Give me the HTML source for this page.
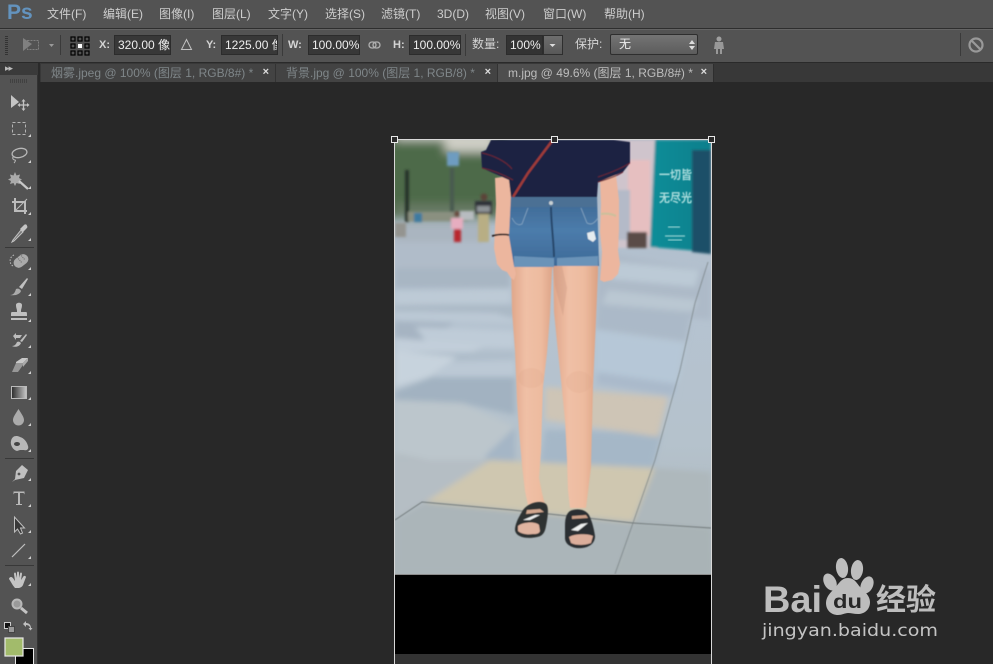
<!DOCTYPE html>
<html><head><meta charset="utf-8"><style>
*{box-sizing:border-box}
html,body{margin:0;padding:0;width:993px;height:664px;overflow:hidden;background:#282828;font-family:"Liberation Sans","Noto Sans CJK SC",sans-serif}
.a{position:absolute;white-space:nowrap}
.m{top:6px;font-size:12px;line-height:16px;color:#cdcdcd}
.l{font-size:12px;line-height:14px;color:#d4d4d4}
.i{height:20px;background:#383838;border:1px solid #2c2c2c;color:#eee;font-size:12px;line-height:19px;padding-left:3px;overflow:hidden;top:35px}
.t{top:64px;height:18px;font-size:12px;line-height:19px;color:#7f8689;border-right:1px solid #333;background:#434343;padding-left:10px}
.x{position:absolute;top:0;font-size:11px;line-height:16px;color:#ddd;font-weight:bold}
</style></head><body>
<div class="a" style="left:0;top:0;width:993px;height:28px;background:#535353"></div>
<div class="a" style="left:0;top:28px;width:993px;height:1px;background:#2e2e2e"></div>
<div class="a" style="left:0;top:29px;width:993px;height:33px;background:#535353;border-top:1px solid #646464"></div>
<div class="a" style="left:0;top:62px;width:993px;height:1px;background:#2a2a2a"></div>
<div class="a" style="left:0;top:63px;width:993px;height:19px;background:#383838"></div>
<div class="a" style="left:0;top:82px;width:993px;height:582px;background:#282828"></div>

<div class="a" style="left:7px;top:0;font-size:21px;line-height:26px;font-weight:bold;color:#6393be">Ps</div>
<div class="a m" style="left:47px">文件(F)</div>
<div class="a m" style="left:103px">编辑(E)</div>
<div class="a m" style="left:159px">图像(I)</div>
<div class="a m" style="left:212px">图层(L)</div>
<div class="a m" style="left:268px">文字(Y)</div>
<div class="a m" style="left:325px">选择(S)</div>
<div class="a m" style="left:381px">滤镜(T)</div>
<div class="a m" style="left:437px">3D(D)</div>
<div class="a m" style="left:485px">视图(V)</div>
<div class="a m" style="left:543px">窗口(W)</div>
<div class="a m" style="left:604px">帮助(H)</div>

<svg class="a" style="left:0;top:29px" width="180" height="33" viewBox="0 29 180 33">
<path d="M5 36.500h3M5 38.500h3M5 40.500h3M5 42.500h3M5 44.500h3M5 46.500h3M5 48.500h3M5 50.500h3M5 52.500h3M5 54.500h3" stroke="#333" stroke-width="1"/>
<path d="M23 38l9 6-9 7z" fill="#808080"/><rect x="27.500" y="40.500" width="11" height="9" fill="none" stroke="#808080" stroke-dasharray="2 1"/>
<path d="M49 44h5l-2.500 3z" fill="#9a9a9a"/><path d="M60.500 35v20" stroke="#3a3a3a"/>
<g fill="none" stroke="#000" stroke-width="1.200"><rect x="71" y="37" width="4" height="4"/><rect x="78" y="37" width="4" height="4"/><rect x="85" y="37" width="4" height="4"/><rect x="71" y="44" width="4" height="4"/><rect x="85" y="44" width="4" height="4"/><rect x="71" y="51" width="4" height="4"/><rect x="78" y="51" width="4" height="4"/><rect x="85" y="51" width="4" height="4"/></g>
<rect x="78" y="44" width="4" height="4" fill="#fff"/>
</svg>

<div class="a l" style="left:99px;top:38px;font-weight:bold;font-size:11px">X:</div>
<div class="a i" style="left:114px;width:57px">320.00 像素</div>
<svg class="a" style="left:180px;top:38px" width="13" height="13"><path d="M6.500 1.500l5 10h-10z" fill="none" stroke="#c0c0c0"/></svg>
<div class="a l" style="left:206px;top:38px;font-weight:bold;font-size:11px">Y:</div>
<div class="a i" style="left:221px;width:57px">1225.00 像素</div>
<div class="a" style="left:282px;top:34px;width:1px;height:22px;background:#3a3a3a"></div>
<div class="a l" style="left:288px;top:38px;font-weight:bold;font-size:11px">W:</div>
<div class="a i" style="left:308px;width:52px">100.00%</div>
<svg class="a" style="left:368px;top:40px" width="13" height="10"><rect x="1" y="2" width="7" height="6" rx="3" fill="none" stroke="#b0b0b0" stroke-width="1.300"/><rect x="5" y="2" width="7" height="6" rx="3" fill="none" stroke="#b0b0b0" stroke-width="1.300"/></svg>
<div class="a l" style="left:393px;top:38px;font-weight:bold;font-size:11px">H:</div>
<div class="a i" style="left:409px;width:52px">100.00%</div>
<div class="a" style="left:465px;top:34px;width:1px;height:22px;background:#3a3a3a"></div>
<div class="a l" style="left:472px;top:37px">数量:</div>
<div class="a i" style="left:506px;width:37px;background:#333">100%</div>
<div class="a" style="left:543px;top:35px;width:20px;height:20px;background:linear-gradient(#6e6e6e,#585858);border:1px solid #2e2e2e"><svg width="18" height="18"><path d="M5.500 8h6l-3 3z" fill="#ddd"/></svg></div>
<div class="a l" style="left:575px;top:37px">保护:</div>
<div class="a" style="left:610px;top:34px;width:88px;height:21px;border:1px solid #2e2e2e;border-radius:2px;background:linear-gradient(#747474,#5c5c5c);color:#eee;font-size:12px;line-height:19px;padding-left:8px">无<svg style="position:absolute;left:77px;top:4px" width="8" height="12"><path d="M4 1l3 4H1zM4 11l3-4H1z" fill="#ddd"/></svg></div>
<svg class="a" style="left:712px;top:36px" width="14" height="19"><circle cx="7" cy="3" r="2.500" fill="#a0a0a0"/><path d="M3 6h8l1 7h-2v5H8v-5H6v5H4v-5H2z" fill="#989898"/></svg>
<div class="a" style="left:960px;top:33px;width:1px;height:23px;background:#3a3a3a"></div>
<svg class="a" style="left:967px;top:36px" width="18" height="18"><circle cx="9" cy="9" r="6.500" fill="none" stroke="#999" stroke-width="2.200"/><path d="M4.500 4.500l9 9" stroke="#999" stroke-width="2.200"/></svg>

<div class="a" style="left:0;top:63px;width:38px;height:601px;background:#535353;border-right:1px solid #333"></div>
<div class="a" style="left:38px;top:63px;width:2px;height:601px;background:#2a2a2a"></div>
<div class="a" style="left:0;top:63px;width:38px;height:12px;background:#3a3a3a"></div>
<div class="a" style="left:5px;top:61px;font-size:9px;line-height:14px;color:#bbb;letter-spacing:-1px">▸▸</div>
<svg class="a" style="left:0;top:75px" width="38" height="589" viewBox="0 75 38 589">
<path d="M10 80h18M10 82h18" stroke="#2f2f2f" stroke-dasharray="1 1" fill="none"/>
<path d="M5 247.500h29M5 458.500h29M5 565.500h29" stroke="#383838" fill="none"/>
<g fill="#d0d0d0"><path d="M31 137h-3l3-3zM31 163h-3l3-3zM31 189h-3l3-3zM31 215h-3l3-3zM31 241h-3l3-3zM31 270h-3l3-3zM31 296h-3l3-3zM31 322h-3l3-3zM31 348h-3l3-3zM31 374h-3l3-3zM31 400h-3l3-3zM31 426h-3l3-3zM31 452h-3l3-3zM31 481h-3l3-3zM31 507h-3l3-3zM31 533h-3l3-3zM31 559h-3l3-3zM31 586h-3l3-3z"/></g>
<path d="M11 95l8 7-8 6z" fill="#c4c4c4"/><path d="M23.500 100v10M18.500 105h10" stroke="#c4c4c4" stroke-width="1.300"/><path d="M23.500 99l2 2.500h-4zM23.500 111l2-2.500h-4zM17.500 105l2.500-2v4zM29.500 105l-2.500-2v4z" fill="#c4c4c4"/>
<rect x="12.500" y="122.500" width="13" height="12" fill="none" stroke="#b4b4b4" stroke-dasharray="3 2"/>
<ellipse cx="19.500" cy="153" rx="7.500" ry="4.500" transform="rotate(-12 19.500 153)" fill="none" stroke="#b8b8b8" stroke-width="1.300"/><path d="M13 157c-1 2 1 3 2 3s0 2-1 3" fill="none" stroke="#b8b8b8"/>
<path d="M15 172l1.500 3.500 3.500-1-1 3.500 3 1.500-3 1.500 1 3-3.500-1-1.500 3-1.500-3-3.500 1 1-3-3-1.500 3-1.500-1-3.500 3.500 1z" fill="#aaa"/><path d="M19 181l9 8" stroke="#c8c8c8" stroke-width="2.200"/>
<path d="M15 198v13h12M12 202h13v12" fill="none" stroke="#bcbcbc" stroke-width="2"/><path d="M15 211l9-9 3-3" stroke="#bcbcbc" fill="none"/>
<path d="M20 229l4-4c1-1 3-1 3 1 1 1 0 2-1 3l-3 3z" fill="#c4c4c4"/><path d="M13 240l-1 2 2-1 9-9-2-2z" fill="#777" stroke="#c4c4c4"/>
<rect x="13" y="256" width="16" height="10" rx="5" transform="rotate(-38 21 261)" fill="#aaa"/><path d="M17 257l5 6M20 254l5 6" stroke="#666" stroke-dasharray="1 1"/><path d="M14 255c-5 2-5 9-1 11" fill="none" stroke="#bbb" stroke-dasharray="1.500 1.500"/>
<path d="M19 287l8-9 1 1-6 10z" fill="#c0c0c0"/><path d="M10 295c4 0 5-3 6-6 2-1 4 0 5 2-1 3-5 5-11 4z" fill="#aaa"/>
<path d="M16 305c0-3 6-3 6 0 0 3-1 4-1 6v1h5c1 0 1 1 1 4H11c0-3 0-4 1-4h5v-1c0-2-1-3-1-6z" fill="#c0c0c0"/><rect x="11" y="318" width="16" height="2" fill="#c0c0c0"/>
<path d="M12 346c3 0 4-2 5-4 2-1 3 0 4 1-1 3-5 5-9 3zM20 341l6-7 1 1-5 7z" fill="#bcbcbc"/><path d="M13 336l3-3v2h6l-2 3h-4v2z" fill="#bcbcbc"/>
<path d="M16 362l6-4h6l-5 5h-7z" fill="#c8c8c8"/><path d="M12 372l4-9h7v2l-5 7z" fill="#979797"/><path d="M23 363l5-5v3l-5 6z" fill="#aaa"/>
<defs><linearGradient id="g" x1="0" x2="1"><stop offset="0" stop-color="#2a2a2a"/><stop offset="1" stop-color="#c8c8c8"/></linearGradient></defs>
<rect x="11.500" y="386.500" width="15" height="12" fill="url(#g)" stroke="#bbb"/>
<path d="M18.500 409c-3 5-5.500 8-5.500 11a5.500 5.500 0 0 0 11 0c0-3-2.500-6-5.500-11z" fill="#ababab"/>
<path d="M11 441c1-5 5-6 9-4 4 1 7 5 8 9 1 3-1 5-4 4h-4l-3 1c-4-1-7-6-6-10z" fill="#b8b8b8"/><ellipse cx="17" cy="444" rx="3" ry="2" fill="#444"/>
<path d="M22 465l6 5-4 8-9 2-3 2 3-3 1-8z" fill="#c0c0c0"/><circle cx="19" cy="474" r="1.400" fill="#555"/>
<path d="M13.500 491.500h11v3l-1-1.500h-3.500v11h2v1h-6v-1h2v-11h-3.500l-1 1.500z" fill="#b8b8b8"/>
<path d="M14.500 517v15l3-3 3 5 2-1-2-5h4z" fill="#383838" stroke="#c0c0c0" stroke-width="1"/>
<path d="M12 557l13-13" stroke="#c0c0c0" stroke-width="1.200" fill="none"/>
<path d="M11 577c2 0 3 3 4 4l-1-7c0-2 2-2 2 0l1 4v-5c0-2 2-2 2 0v5l1-4c0-2 2-2 2 0l-1 6 2-3c1-2 3-1 3 0l-3 8c-1 2-3 3-5 3h-3c-2-2-4-6-6-9 0-1 1-2 2-2z" fill="#c4c4c4"/>
<circle cx="17" cy="604" r="4.500" fill="#9a9a9a" stroke="#b8b8b8" stroke-width="2"/><path d="M21 608l6 5" stroke="#c4c4c4" stroke-width="3"/>
<rect x="4.500" y="622.500" width="6" height="6" fill="#111" stroke="#ccc"/><rect x="8.500" y="626.500" width="6" height="6" fill="#999" stroke="#444"/>
<path d="M23 624l3-3v2c3 0 5 2 5 5h1.500l-2 2.500-2-2.500H30c0-2-2-3-4-3v2z" fill="#c0c0c0"/>
<rect x="15.500" y="648.500" width="18" height="20" fill="#000" stroke="#e8e8e8"/>
<rect x="5" y="638" width="18" height="18" fill="#a2bb6b" stroke="#e8e8e8" stroke-width="1.200"/>
</svg>

<div class="a t" style="left:41px;width:235px">烟雾.jpeg @ 100% (图层 1, RGB/8#) *<span class="x" style="right:6px">×</span></div>
<div class="a t" style="left:276px;width:222px">背景.jpg @ 100% (图层 1, RGB/8) *<span class="x" style="right:6px">×</span></div>
<div class="a t" style="left:498px;width:216px;background:#4e4e4e;color:#bdbdbd;border-right:1px solid #2e2e2e">m.jpg @ 49.6% (图层 1, RGB/8#) *<span class="x" style="right:6px">×</span></div>

<svg class="a" style="left:0;top:0" width="993" height="664" viewBox="0 0 993 664">
<defs>
<clipPath id="c"><rect x="395" y="140" width="316" height="434"/></clipPath>
<filter id="b6" x="-20%" y="-20%" width="140%" height="140%"><feGaussianBlur stdDeviation="5"/></filter>
<filter id="b3" x="-10%" y="-10%" width="120%" height="120%"><feGaussianBlur stdDeviation="3"/></filter>
<filter id="b2" x="-20%" y="-20%" width="140%" height="140%"><feGaussianBlur stdDeviation="1.200"/></filter>
<filter id="b1" x="-5%" y="-5%" width="110%" height="110%"><feGaussianBlur stdDeviation="0.600"/></filter>
<linearGradient id="ground" x1="0" y1="0" x2="0" y2="1"><stop offset="0" stop-color="#abb7c4"/><stop offset=".35" stop-color="#b5c3d1"/><stop offset=".7" stop-color="#b5c2cc"/><stop offset="1" stop-color="#abb4b8"/></linearGradient>
<linearGradient id="leg" x1="0" x2="1"><stop offset="0" stop-color="#dfa68a"/><stop offset=".35" stop-color="#f0c0a6"/><stop offset=".7" stop-color="#edbb9f"/><stop offset="1" stop-color="#dba184"/></linearGradient>
<linearGradient id="jean" x1="0" y1="0" x2="0" y2="1"><stop offset="0" stop-color="#3c6691"/><stop offset=".5" stop-color="#4c7cab"/><stop offset="1" stop-color="#3d6997"/></linearGradient>
<linearGradient id="teal" x1="0" x2="1"><stop offset="0" stop-color="#0f8d98"/><stop offset="1" stop-color="#0f7f8c"/></linearGradient>
</defs>
<g clip-path="url(#c)">
<rect x="395" y="140" width="316" height="434" fill="url(#ground)"/>
<!-- tiles -->
<g filter="url(#b3)">
<path d="M395 222h90v20H395z" fill="#aab5c0"/>
<path d="M395 242h115v26H395z" fill="#b0bcc9"/>
<path d="M395 268h115v20H395z" fill="#a8b6c3"/>
<path d="M395 291l115-2v14l-115 2z" fill="#bdcad6"/>
<path d="M395 305h120v12H395z" fill="#abb9c6"/>
<path d="M395 311l100 2 20 6v4l-120-3z" fill="#bcc9d5"/>
<path d="M395 321l60 2-35 18-25-2z" fill="#a6b4c2"/>
<path d="M415 327l100 4 0 17-85-2z" fill="#bfccd8"/>
<path d="M395 338l90 8-20 9-70-2z" fill="#c3cfda"/>
<path d="M395 352h120v8l-60 8-60-5z" fill="#afbdca"/>
<path d="M395 351l62 6-28 20-34 10z" fill="#c7d3dd"/>
<path d="M450 362l65-2v18l-85 0z" fill="#bcc9d5"/>
<path d="M395 392l37-15h83v38l-53-12-67-3z" fill="#a2b2c1"/>
<path d="M395 400l67 3 53 24-27 26-13 17-80-17z" fill="#bcc6cc"/>
<path d="M515 427v41h-35l8-15z" fill="#a5b6c6"/>
<path d="M545 430l117 3-10 37H540z" fill="#a5b7c7"/>
<path d="M395 453l85 17-10 0H395z" fill="#b4bdc2"/>
<path d="M597 252l114 18v50l-18-2-96-10z" fill="#adbac8"/>
<path d="M615 262l85 8-5 17-85-8z" fill="#bccad6"/>
<path d="M608 290l90 10-6 12-90-8z" fill="#bac7d2"/>
<path d="M597 305l94 8-5 28-90-12z" fill="#abb9c8"/>
<path d="M595 330l90 13-10 54-80-17z" fill="#b6c7d7"/>
<path d="M597 372l80 12-4 12-76-12z" fill="#aabacb"/>
<path d="M545 387l123 10-10 40-113-17z" fill="#cec5b6"/>
<path d="M490 460l165 8-22 54-208-20z" fill="#cfc7b0"/>
<path d="M395 460h95l-65 42-30 18z" fill="#b5bec4"/>
<path d="M395 520l30-18 208 20-18 52H395z" fill="#abb5b9"/>
<path d="M633 522l78 6v46h-96z" fill="#a9b3b6"/>
<path d="M655 468l56 4v56l-78-6z" fill="#aeb8bc"/>
</g>
<g filter="url(#b6)">
<rect x="385" y="130" width="120" height="88" fill="#4e6b4a"/>
<rect x="395" y="130" width="60" height="10" fill="#cfd0c8"/>
<rect x="445" y="132" width="50" height="20" fill="#cfcfc6"/>
<rect x="395" y="205" width="100" height="8" fill="#6f7f6c"/>
</g>
<g filter="url(#b2)">
<rect x="405" y="170" width="4" height="52" fill="#26302a"/>
<rect x="450" y="168" width="4" height="45" fill="#4a5a50"/>
<rect x="447" y="152" width="12" height="14" fill="#6e9cc0"/>
<rect x="395" y="223" width="11" height="14" fill="#949490"/>
<rect x="408" y="212" width="60" height="9" fill="#8a9080"/>
<rect x="414" y="213" width="8" height="9" fill="#3c7aa0"/>
<rect x="460" y="211" width="14" height="9" fill="#b7bcc0"/>
<rect x="475" y="201" width="17" height="13" fill="#2d3237"/><rect x="477" y="206" width="13" height="6" fill="#8d9396"/>
<rect x="478" y="214" width="11" height="28" fill="#b8ae84"/>
<circle cx="484" cy="197" r="3.500" fill="#5c4238"/>
<rect x="451" y="218" width="12" height="11" fill="#e6adc0"/><rect x="454" y="229" width="7" height="13" fill="#b8262f"/><circle cx="457" cy="214" r="3" fill="#6a4c40"/>
</g>
<g filter="url(#b2)">
<rect x="612" y="140" width="45" height="108" fill="#cfc4cc"/>
<rect x="628" y="160" width="22" height="75" fill="#e6bfc0"/>
<rect x="616" y="190" width="14" height="50" fill="#b4bac8"/>
<rect x="627" y="232" width="20" height="16" fill="#5a4c46"/>
<path d="M655 140h56v112l-61-5z" fill="url(#teal)"/>
<path d="M692 150h19v104l-19-2z" fill="#1f5068"/>
</g>
<g fill="#a9dcdc" font-size="12" font-weight="bold" font-family="'Liberation Sans','Noto Sans CJK SC',sans-serif" filter="url(#b1)">
<text x="659" y="179" textLength="33" lengthAdjust="spacingAndGlyphs">一切皆</text>
<text x="659" y="202" textLength="33" lengthAdjust="spacingAndGlyphs">无尽光</text>
</g>
<path d="M668 227h12M665 236h20M668 240h14" stroke="#8fd0d0" stroke-width="1.200" filter="url(#b1)"/>
<g fill="none" stroke="#727a7c" filter="url(#b1)">
<path d="M395 520l27-18 90 8 121 13 78 5" stroke-width=".9"/>
<path d="M615 574l18-51 22-63 25-90 15-67 13-41" stroke-width=".9" opacity=".7"/>
</g>
<!-- legs -->
<g filter="url(#b1)">
<path d="M511 262l43 0-2 8-2 45-3 38-4 34-1 30-1 35-2 26 3 15 3 12h-17l-3-14-3-26-3-34-2-30-2-50-3-40z" fill="url(#leg)"/>
<path d="M553 262h45v10l-2 48-3 67-1 40-1 40-3 25-2 16h-16l-2-18-1-30-2-40-3-30-4-38-4-40z" fill="url(#leg)"/>
<ellipse cx="531" cy="378" rx="13" ry="10" fill="#d99f85" opacity=".18"/>
<ellipse cx="579" cy="382" rx="13" ry="11" fill="#d99f85" opacity=".18"/>
<path d="M553 266l9 0 5 22-4 28-8-30z" fill="#bb8872" opacity=".25"/>
<path d="M495 178l16-2 1 20-2 20 0 24 3 20 3 14-2 6-3-2-4-6-5-2-5-6-3-16 1-20 1-24z" fill="#ecb69e"/>
<path d="M600 178l16-3 3 25 0 30-1 20 2 14-2 10-6 6-8 2-4-2 1-12 1-16-2-20 1-28z" fill="#ecb69e"/>
<path d="M492 236c5-1.500 12-2 17-1" stroke="#2b2023" stroke-width="1.800" fill="none"/>
<path d="M601 214c6-1 11 0 15 2" stroke="#cdbf9c" stroke-width="2.200" fill="none"/>
<path d="M511 195h86l1 35 1 36-85 0-5-30z" fill="url(#jean)"/>
<path d="M514 256l40 2v9h-40zM557 258l41-2v10h-41z" fill="#6a93b8"/>
<path d="M511 196h86v11h-86z" fill="#4b6f94"/>
<path d="M551 207c0 15 3 38 3 50" stroke="#28476a" stroke-width="2" fill="none"/>
<path d="M512 218c3 6 6 8 10 6l6-16M598 218c-4 6-7 7-11 5l-6-15" stroke="#86a6c2" stroke-width=".8" fill="none"/>
<path d="M587 233l7-2 2 8-3 3-5-3z" fill="#e6ecef"/>
<circle cx="551" cy="203" r="2" fill="#c7cfd3"/>
<path d="M491 140h123l16 2 0 21-7 9-25 10-1 15h-86l-2-17-27-12-1-16 5-2z" fill="#1e2443"/>
<path d="M482 168c10 2 20 6 31 12M482 153c10 2 24 8 30 16M630 163c-8 5-20 10-32 14M623 172c-6 4-14 7-25 10" stroke="#6b2633" stroke-width="1" fill="none"/>
<path d="M552 141l-24 32-15 24" stroke="#9e3b39" stroke-width="2.400" fill="none"/>
</g>
<!-- sandals -->
<g filter="url(#b1)">
<path d="M515 530c0-7 5-15 8-20 6-8 18-10 23-6 3 3 2 12 0 22-1 6-3 10-9 11-9 2-21 1-22-7z" fill="#2d3032"/>
<path d="M518 526c4-4 18-5 21-1l1 6c-1 3-4 3-7 3-5 1-12 0-15-3z" fill="#e0b4a0"/>
<path d="M527 510l13-1 4 3-18 2z" fill="#d3a78f"/>
<path d="M523 520l12-5 5 0-10 5z" fill="#eef0f0"/>
<path d="M565 526c0-7 1-12 5-15 7-3 15-2 19 4 3 6 5 14 6 21 0 7-5 11-13 12-9 1-17-3-17-10z" fill="#2b2e30"/>
<path d="M569 537c4-3 18-4 24-1l-2 7c-5 2-14 3-20 0z" fill="#dcae9b"/>
<path d="M572 516l14-1 2 3-16 1z" fill="#c99d86"/>
<path d="M571 530l10-6 7-1-10 8z" fill="#eef0f0"/>
</g>
</g>
<rect x="395" y="575" width="316" height="79" fill="#000"/>
<rect x="395" y="654" width="316" height="10" fill="#333"/>
<rect x="395" y="574" width="316" height="1" fill="#8c8c8c"/>
<path d="M394.500 140v524M711.500 140v524M395 139.500h316" stroke="#d8d8d8" stroke-width="1" fill="none"/>
<g fill="#2a2a2a" stroke="#e8e8e8"><rect x="391.500" y="136.500" width="6" height="6"/><rect x="551.500" y="136.500" width="6" height="6"/><rect x="708.500" y="136.500" width="6" height="6"/></g>

<!-- watermark -->
<g fill="#bdbdbd">
<ellipse cx="842" cy="568" rx="6" ry="10" transform="rotate(-8 842 568)"/>
<ellipse cx="857" cy="570" rx="6" ry="10" transform="rotate(8 857 570)"/>
<ellipse cx="830" cy="582" rx="6" ry="9" transform="rotate(-28 830 582)"/>
<ellipse cx="867" cy="585" rx="6" ry="9" transform="rotate(25 867 585)"/>
<path d="M848 578c7 0 9 6 13 10 4 4 9 8 9 14 0 8-6 12-12 12-4 0-7-1-10-1s-6 2-10 2c-7 0-12-5-12-12 0-6 4-10 8-14 4-4 7-11 14-11z"/>
<text x="763" y="612" font-family="'Liberation Sans',sans-serif" font-size="37" font-weight="bold" textLength="59" lengthAdjust="spacingAndGlyphs">Bai</text>
<text x="876" y="610" font-family="'Liberation Sans','Noto Sans CJK SC',sans-serif" font-size="30" font-weight="bold" textLength="60" lengthAdjust="spacingAndGlyphs">经验</text>
<text x="762" y="636" font-family="'DejaVu Sans','Liberation Sans',sans-serif" font-size="17" fill="#c4c4c4" textLength="176" lengthAdjust="spacingAndGlyphs">jingyan.baidu.com</text>
</g>
<text x="833" y="608" font-family="'Liberation Sans',sans-serif" font-size="19" font-weight="bold" fill="#282828" textLength="29" lengthAdjust="spacingAndGlyphs">du</text>
</svg>
</body></html>
